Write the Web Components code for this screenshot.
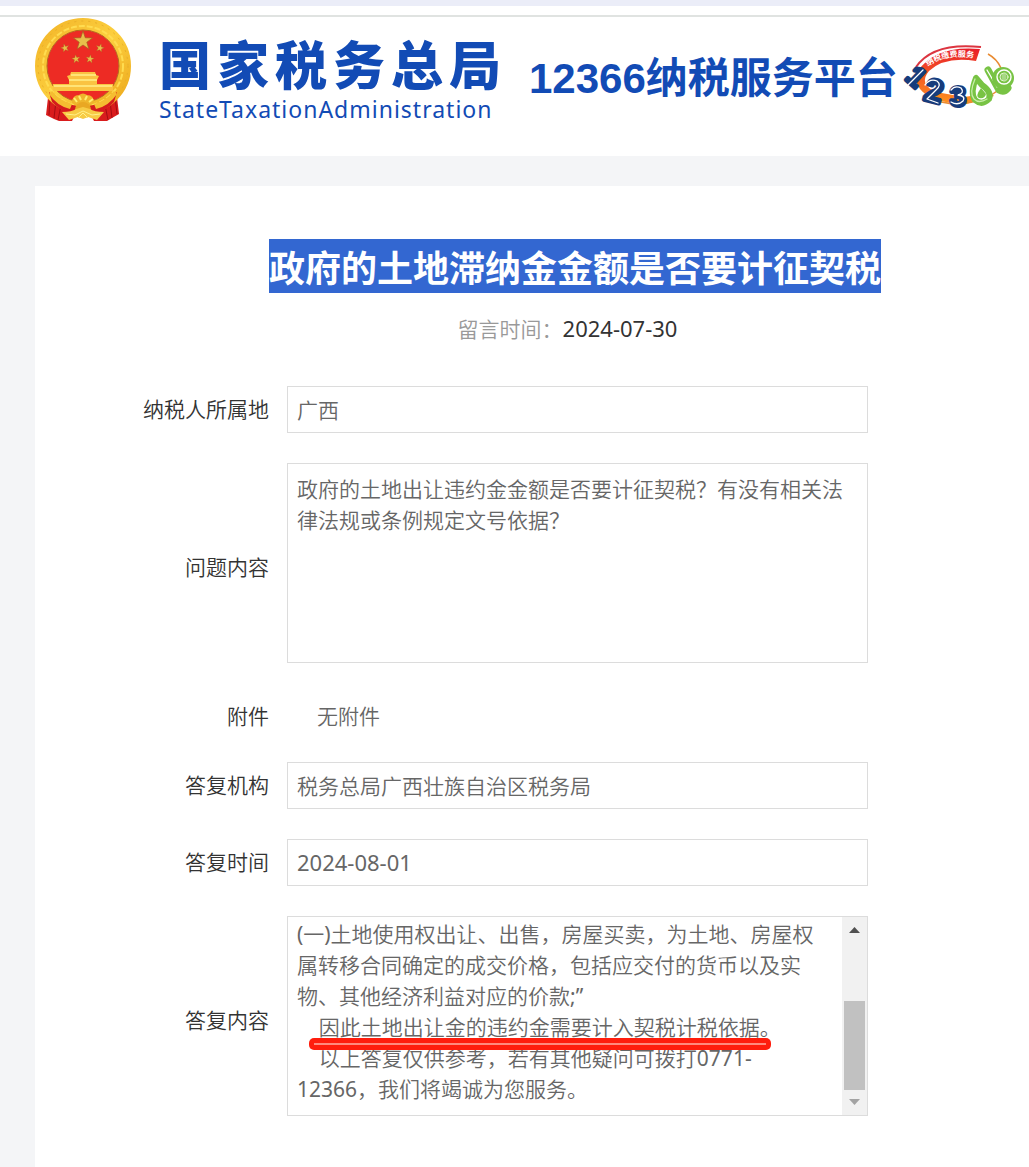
<!DOCTYPE html>
<html lang="zh-CN">
<head>
<meta charset="utf-8">
<meta name="viewport" content="width=device-width, initial-scale=1">
<title>12366纳税服务平台</title>
<style>
  body {
    margin: 0;
    background: #f4f5f7;
    color: #333;
    font: 21px/31px "Noto Sans", "Noto Sans CJK SC DemiLight", "Noto Sans CJK SC Light", "Noto Sans CJK SC", sans-serif;
    text-spacing-trim: space-all;
  }
</style>
</head>
<body>
<tax-page>
  <site-header slot="header"></site-header>
  <message-head slot="head" date="2024-07-30">政府的土地滞纳金金额是否要计征契税</message-head>
  <form-row label="纳税人所属地" value="广西"></form-row>
  <form-row label="问题内容" type="area" value="政府的土地出让违约金金额是否要计征契税？有没有相关法律法规或条例规定文号依据？"></form-row>
  <form-row label="附件" type="text" value="无附件"></form-row>
  <form-row label="答复机构" value="税务总局广西壮族自治区税务局"></form-row>
  <form-row label="答复时间" type="date" value="2024-08-01"></form-row>
  <form-row label="答复内容" type="scroll" value="(一)土地使用权出让、出售，房屋买卖，为土地、房屋权属转移合同确定的成交价格，包括应交付的货币以及实物、其他经济利益对应的价款;”
    因此土地出让金的违约金需要计入契税计税依据。
    以上答复仅供参考，若有其他疑问可拨打0771-
12366，我们将竭诚为您服务。"></form-row>
</tax-page>

<script>
class TaxPage extends HTMLElement {
  constructor() {
    super();
    this.attachShadow({ mode: "open" }).innerHTML = `
      <style>
        :host { display: flex; flex-direction: column; min-height: 100vh; }
        main {
          flex: 1;
          box-sizing: border-box;
          margin: 30px 0 0 35px;
          padding: 53px 0 51px;
          background: #fff;
        }
        form {
          display: flex;
          flex-direction: column;
          gap: 30px;
          margin-top: 41px;
          padding-right: 161px;
        }
      </style>
      <slot name="header"></slot>
      <main>
        <slot name="head"></slot>
        <form><slot></slot></form>
      </main>
    `;
  }
}

class NationalEmblem extends HTMLElement {
  constructor() {
    super();
    this.attachShadow({ mode: "open" }).innerHTML = `
      <style>
        :host { display: block; width: 96px; }
        svg { display: block; width: 100%; }
      </style>
      <svg viewBox="0 0 96 104" aria-hidden="true">
        <defs>
          <linearGradient id="gold" x1="0" y1="0" x2="1" y2="1">
            <stop offset="0" stop-color="#f3b62a"/>
            <stop offset=".5" stop-color="#fccf3e"/>
            <stop offset="1" stop-color="#eda91d"/>
          </linearGradient>
          <path id="star" d="M0-10L2.3-3.2 9.5-3.1 3.8 1.2 5.9 8.1 0 4-5.9 8.1-3.8 1.2-9.5-3.1-2.3-3.2z"/>
        </defs>
        <path d="M14 71L11 97l8 4 5 2h13l4-8h14l4 8h13l5-3 7-4-3-25-18 13H32z" fill="#d91c1d"/>
        <path d="M15 80l-1 17M21 83l-2 17M26 87l-3 15M80 79l2 17M75 83l2 17M70 87l3 15" stroke="#a50c12" fill="none"/>
        <circle cx="48" cy="48" r="42" fill="none" stroke="url(#gold)" stroke-width="12"/>
        <circle cx="48" cy="48" r="45" fill="none" stroke="#e9ae28" stroke-width="1" stroke-dasharray="2 5"/>
        <circle cx="48" cy="48" r="40" fill="none" stroke="#ffdc50" stroke-width="2" stroke-dasharray="6 2"/>
        <circle cx="48" cy="48" r="36" fill="#ed2b24" stroke="#b66a19"/>
        <g fill="#e7bf4b" stroke="#a85d20" stroke-width=".7">
          <use href="#star" transform="translate(48 23)"/>
          <use href="#star" transform="translate(30 30) scale(.44) rotate(-15)"/>
          <use href="#star" transform="translate(65 30) scale(.44) rotate(15)"/>
          <use href="#star" transform="translate(41 41) scale(.44) rotate(-8)"/>
          <use href="#star" transform="translate(55 41) scale(.44) rotate(8)"/>
        </g>
        <path d="M36 54h24l1 3 3 1-2 4v4h16v7H18v-7h16v-4l-2-4 3-1z" fill="#fac342"/>
        <path d="M36 57h25M34 62h28M19 68h58" stroke="#ffe477" stroke-width="2"/>
        <path d="M14 74q14 13 34 15 20-2 34-15l-3 10Q67 97 48 97 29 97 17 84z" fill="#d51b1d"/>
        <path d="M17 73q8 10 20 13l-2 5Q22 88 14 76zM79 73q-8 10-20 13l2 5q13-3 21-15z" fill="#f5bd31"/>
        <path d="M37 85q0-8 7-8 4-3 8 0 7 0 7 8l-5 3H42z" fill="#efb52c"/>
        <path d="M42 84l-3-4M46 82l-2-4M50 82l2-4M54 84l4-3" stroke="#fff06e" stroke-width="2"/>
        <circle cx="48" cy="92" r="8" fill="#e9a723"/>
        <path d="M27 94q10 0 14-3l7-2 7 2q4 3 14 3l-7 8-9-3-5 2-5-2-9 3z" fill="#f7cb45"/>
        <path d="M31 96l9 1 8-4 9 4 8-1M43 100l5-5 5 5" fill="none" stroke="#fff18c"/>
      </svg>
    `;
  }
}

class HotlineLogo extends HTMLElement {
  constructor() {
    super();
    this.attachShadow({ mode: "open" }).innerHTML = `
      <style>
        :host { display: block; width: 111px; }
        svg { display: block; width: 100%; overflow: visible; }
        .num {
          fill: #173c7c;
          stroke: #173c7c;
          stroke-width: 4;
          stroke-linejoin: round;
          font-family: "Liberation Sans", sans-serif;
          font-weight: bold;
          text-anchor: middle;
        }
        .slogan { font: bold 8px "Liberation Sans", "Noto Sans CJK SC", sans-serif; fill: #fff; }
      </style>
      <svg viewBox="0 0 111 66" role="img" aria-label="12366">
        <defs>
          <linearGradient id="band" x1="0" x2="0" y1="0" y2="1">
            <stop offset="0" stop-color="#e91e2a"/>
            <stop offset="1" stop-color="#ff941f"/>
          </linearGradient>
          <path id="arc" d="M23 23Q43 8 75 15"/>
        </defs>
        <path d="M12 23Q29-2 77 3" fill="none" stroke="#dc3540" stroke-width="2"/>
        <path d="M14 27Q31 1 76 5L72 17Q41 12 25 27 14 40 32 48l28 5 27-4 3 3-28 8Q27 59 16 45 9 35 14 27z" fill="url(#band)"/>
        <path d="M25 54q28 12 58-1 23-10 14-29-4-9-13-14" fill="none" stroke="#e98b31" stroke-width="1.5"/>
        <text class="slogan"><textPath href="#arc" startOffset="1">纳税缴费服务</textPath></text>
        <text class="num" font-size="27" transform="translate(12 33) rotate(42)" y="9">1</text>
        <text class="num" font-size="32" transform="translate(30 47) rotate(14)" y="11">2</text>
        <text class="num" font-size="28" transform="translate(54 52)" y="10">3</text>
        <path d="M4 41L19 26M21 41q5-7 12-4 5 4-1 9l-9 9 11 4M47 46q4-5 10-2 4 5-3 7 8 1 5 6-5 5-12 1" fill="none" stroke="#fff" stroke-width="1.3" stroke-linecap="round" stroke-linejoin="round"/>
        <g fill="none" stroke-linecap="round" stroke-linejoin="round">
          <path d="M72 34q-6 15-1 22 7 6 14-1 3-7-7-14z" fill="#fff" stroke="#78c344" stroke-width="6"/>
          <path d="M71 35q-6 14-1 20 5 5 13 0" stroke="#c9efaa" stroke-width="1.3"/>
          <path d="M77 44q-6 8-2 10 6 1 7-4z" fill="#78c344" stroke="none"/>
          <path d="M84 26l11 20q5 3 9-2" stroke="#78c344" stroke-width="7"/>
          <path d="M83 26l10 17" stroke="#fff" stroke-width="1.3"/>
          <circle cx="99" cy="34" r="11" fill="#78c344"/>
          <circle cx="100" cy="33" r="7" stroke="#fff" stroke-width="1.4"/>
          <circle cx="100" cy="33" r="4" stroke="#e4f6d3"/>
          <path d="M98 31h4m-4 2h4m-4 2h4" stroke="#fff" stroke-width=".7"/>
        </g>
      </svg>
    `;
  }
}

class SiteHeader extends HTMLElement {
  constructor() {
    super();
    this.attachShadow({ mode: "open" }).innerHTML = `
      <style>
        :host { display: block; background: #fff; color: #124bb5; }
        .bar { height: 9px; border-top: 6px solid #ebedf8; border-bottom: 2px solid #e0e3e1; }
        header {
          display: flex;
          align-items: flex-start;
          box-sizing: border-box;
          height: 139px;
          padding: 1px 14px 0 35px;
          white-space: nowrap;
        }
        .brand { margin: 20px 0 0 28px; }
        .cn { font: 900 52px/58px "Liberation Sans", "Noto Sans CJK SC", sans-serif; letter-spacing: 6px; }
        .en { font-size: 23px; line-height: 26px; letter-spacing: 1px; }
        .name { margin: 31px 0 0 22px; font: bold 42px/60px "Liberation Sans", "Noto Sans CJK SC", sans-serif; }
        hotline-logo { margin: 26px 0 0 auto; }
      </style>
      <div class="bar"></div>
      <header>
        <national-emblem></national-emblem>
        <div class="brand">
          <div class="cn">国家税务总局</div>
          <div class="en">StateTaxationAdministration</div>
        </div>
        <div class="name">12366纳税服务平台</div>
        <hotline-logo></hotline-logo>
      </header>
    `;
  }
}

class MessageHead extends HTMLElement {
  constructor() {
    super();
    this.attachShadow({ mode: "open" }).innerHTML = `
      <style>
        :host { display: block; padding-left: 86px; text-align: center; }
        h1 {
          width: fit-content;
          margin: 0 auto;
          background: #3367d1;
          color: #fff;
          font: bold 36px/54px "Noto Sans CJK SC", sans-serif;
        }
        p { margin: 20px 15px 0 0; color: #999; }
        time { color: #333; font-size: 22px; }
      </style>
      <h1><slot></slot></h1>
      <p>留言时间：<time></time></p>
    `;
    this.shadowRoot.querySelector("time").textContent = this.getAttribute("date");
  }
}

class ScrollRail extends HTMLElement {
  constructor() {
    super();
    this.attachShadow({ mode: "open" }).innerHTML = `
      <style>
        :host { display: flex; flex-direction: column; width: 25px; background: #f1f1f1; }
        svg { display: block; width: 25px; height: 25px; }
        .track { display: flex; flex: 1; flex-direction: column; justify-content: flex-end; padding: 0 2px; }
        .thumb { height: 60%; background: #c1c1c1; }
      </style>
      <svg viewBox="0 0 25 25"><path d="M7 16l5.5-6 5.5 6z" fill="#505050"/></svg>
      <div class="track"><div class="thumb"></div></div>
      <svg viewBox="0 0 25 25"><path d="M7 9h11l-5.5 6z" fill="#a3a3a3"/></svg>
    `;
  }
}

class FormRow extends HTMLElement {
  constructor() {
    super();
    this.attachShadow({ mode: "open" });
  }

  connectedCallback() {
    const type = this.getAttribute("type") || "input";
    this.shadowRoot.innerHTML = `
      <style>
        :host { display: grid; grid-template-columns: 234px minmax(0, 1fr); column-gap: 18px; align-items: center; }
        :host([type="area"]) label, :host([type="scroll"]) label { padding-top: 8px; }
        :host([type="text"]) { padding-top: 8px; }
        label { text-align: right; }
        input, textarea, .box {
          display: block;
          box-sizing: border-box;
          width: 100%;
          margin: 0;
          border: 1px solid #dcdcdc;
          border-radius: 0;
          background: #fff;
          color: #666;
          font: inherit;
          text-spacing-trim: inherit;
          outline: 0;
        }
        input { height: 47px; padding: 0 9px 2px; }
        :host([type="date"]) input { font-size: 22px; }
        textarea { height: 200px; padding: 10px 9px; resize: none; overflow: hidden; }
        .box { position: relative; display: flex; height: 200px; }
        .box textarea { flex: 1; min-width: 0; height: 100%; padding-top: 2px; border: 0; }
        .mark {
          position: absolute;
          top: 121px;
          left: 21px;
          box-sizing: border-box;
          width: 462px;
          height: 12px;
          padding: 5px;
          border-radius: 5px;
          background: #ff1d0d;
        }
        .mark::after { content: ""; display: block; height: 2px; background: #ff8a7e; }
        output { padding-left: 30px; color: #666; }
      </style>
      <label for="field"></label>
      ${this.control(type)}
    `;
    this.shadowRoot.querySelector("label").textContent = this.getAttribute("label");
    this.shadowRoot.querySelector("#field").value = this.getAttribute("value");
  }

  control(type) {
    if (type === "area") return `<textarea id="field" readonly></textarea>`;
    if (type === "text") return `<output id="field"></output>`;
    if (type === "scroll") {
      return `<div class="box">
        <textarea id="field" readonly></textarea>
        <scroll-rail></scroll-rail>
        <div class="mark"></div>
      </div>`;
    }
    return `<input id="field" type="text" readonly>`;
  }
}

customElements.define("national-emblem", NationalEmblem);
customElements.define("hotline-logo", HotlineLogo);
customElements.define("scroll-rail", ScrollRail);
customElements.define("site-header", SiteHeader);
customElements.define("message-head", MessageHead);
customElements.define("form-row", FormRow);
customElements.define("tax-page", TaxPage);
</script>
</body>
</html>
